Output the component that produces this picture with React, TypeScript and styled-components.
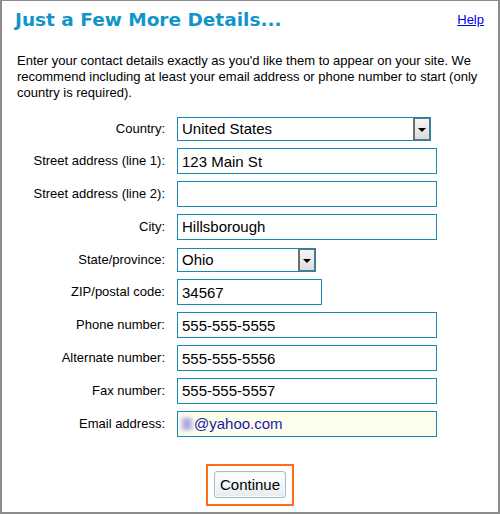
import React from "react"
import styled, { createGlobalStyle } from "styled-components"

const GlobalStyle = createGlobalStyle`
  html, body {
    margin: 0;
    padding: 0;
    background: #ffffff;
  }
  body {
    font-family: "Liberation Sans", Arial, sans-serif;
  }
`

const teal = "#168ab5"

interface Row {
  label: string
  value: string
  kind: "input" | "select" | "email"
  width: number
}

const rows: Row[] = [
  { label: "Country:", value: "United States", kind: "select", width: 254 },
  { label: "Street address (line 1):", value: "123 Main St", kind: "input", width: 260 },
  { label: "Street address (line 2):", value: "", kind: "input", width: 260 },
  { label: "City:", value: "Hillsborough", kind: "input", width: 260 },
  { label: "State/province:", value: "Ohio", kind: "select", width: 139 },
  { label: "ZIP/postal code:", value: "34567", kind: "input", width: 145 },
  { label: "Phone number:", value: "555-555-5555", kind: "input", width: 260 },
  { label: "Alternate number:", value: "555-555-5556", kind: "input", width: 260 },
  { label: "Fax number:", value: "555-555-5557", kind: "input", width: 260 },
  { label: "Email address:", value: "@yahoo.com", kind: "email", width: 260 }
]

function Field({ row }: { row: Row }) {
  if (row.kind === "select") {
    return (
      <SelectBox $width={row.width}>
        <SelectText>{row.value}</SelectText>
        <SelectButton>
          <Arrow />
        </SelectButton>
      </SelectBox>
    )
  }
  if (row.kind === "email") {
    return (
      <EmailWrap $width={row.width}>
        <Blur />
        <TextInput $width={row.width} $email readOnly defaultValue={row.value} />
      </EmailWrap>
    )
  }
  return <TextInput $width={row.width} readOnly defaultValue={row.value} />
}

export default function App() {
  return (
    <>
      <GlobalStyle />
      <Panel>
        <Header>
          <Title>Just a Few More Details...</Title>
          <HelpLink href="#">Help</HelpLink>
        </Header>
        <Intro>
          Enter your contact details exactly as you'd like them to appear on your site. We
          recommend including at least your email address or phone number to start (only
          country is required).
        </Intro>
        <Form>
          {rows.map(row => (
            <React.Fragment key={row.label}>
              <Label>{row.label}</Label>
              <Field row={row} />
            </React.Fragment>
          ))}
        </Form>
        <Footer>
          <Highlight>
            <ContinueButton>Continue</ContinueButton>
          </Highlight>
        </Footer>
      </Panel>
    </>
  )
}

const Panel = styled.div`
  width: 500px;
  height: 514px;
  box-sizing: border-box;
  border: 2px solid #8c8c8c;
  border-top-width: 1px;
  background: #ffffff;
`

const Header = styled.div`
  display: flex;
  justify-content: space-between;
  align-items: flex-start;
  padding: 7px 14px 0 13px;
`

const Title = styled.h1`
  margin: 0;
  font-family: "DejaVu Sans", Verdana, sans-serif;
  font-weight: bold;
  font-size: 18.5px;
  line-height: 24px;
  color: #1195c8;
`

const HelpLink = styled.a`
  margin-top: 4px;
  font-size: 13px;
  line-height: 16px;
  color: #0000ee;
  text-decoration: underline;
`

const Intro = styled.p`
  margin: 21px 0 0 0;
  padding: 0 12px 0 15px;
  font-size: 13px;
  line-height: 16px;
  color: #000000;
`

const Form = styled.div`
  display: grid;
  grid-template-columns: 163px 1fr;
  grid-auto-rows: 26px;
  column-gap: 12px;
  row-gap: 6.8px;
  align-items: center;
  margin-top: 14.5px;
`

const Label = styled.div`
  text-align: right;
  font-size: 13px;
  line-height: 16px;
  color: #000000;
`

const TextInput = styled.input<{ $width: number; $email?: boolean }>`
  box-sizing: border-box;
  width: ${p => p.$width}px;
  height: 26px;
  margin: 0;
  padding: 0 0 0 ${p => (p.$email ? 16 : 4)}px;
  border: 1px solid ${teal};
  border-radius: 0;
  outline: none;
  font-family: "Liberation Sans", Arial, sans-serif;
  font-size: 15px;
  color: ${p => (p.$email ? "#1a1aa8" : "#000000")};
  background: ${p => (p.$email ? "#fdfdec" : "#ffffff")};
`

const EmailWrap = styled.div<{ $width: number }>`
  position: relative;
  width: ${p => p.$width}px;
  height: 26px;
`

const Blur = styled.span`
  position: absolute;
  left: 5px;
  top: 7px;
  width: 10px;
  height: 12px;
  background: #a9a9e0;
  filter: blur(2px);
  z-index: 1;
`

const SelectBox = styled.div<{ $width: number }>`
  box-sizing: border-box;
  width: ${p => p.$width}px;
  height: 24px;
  display: flex;
  align-items: stretch;
  border: 1px solid ${teal};
  background: #ffffff;
`

const SelectText = styled.span`
  flex: 1;
  display: flex;
  align-items: center;
  padding-left: 4px;
  font-size: 15px;
  color: #000000;
`

const SelectButton = styled.span`
  box-sizing: border-box;
  width: 17px;
  display: flex;
  align-items: center;
  justify-content: center;
  border: 1px solid #6e6e6e;
  border-width: 1px 1px 1px 2px;
  background: linear-gradient(#f6f6f6, #dcdcdc);
`

const Arrow = styled.span`
  width: 0;
  height: 0;
  margin-top: 2px;
  border-left: 4px solid transparent;
  border-right: 4px solid transparent;
  border-top: 4px solid #000000;
`

const Footer = styled.div`
  display: flex;
  justify-content: center;
  margin-top: 27px;
`

const Highlight = styled.div`
  display: flex;
  border: 2px solid #ff6b17;
  padding: 5px 6px 6px;
`

const ContinueButton = styled.button`
  box-sizing: border-box;
  width: 72px;
  height: 27px;
  padding: 0;
  border: 1px solid #a3bfcf;
  border-radius: 3px;
  background: linear-gradient(#ffffff, #e6ecf0);
  box-shadow: inset 0 0 0 1px #f4f8fb;
  font-family: "Liberation Sans", Arial, sans-serif;
  font-size: 15px;
  color: #000000;
  cursor: pointer;
`
